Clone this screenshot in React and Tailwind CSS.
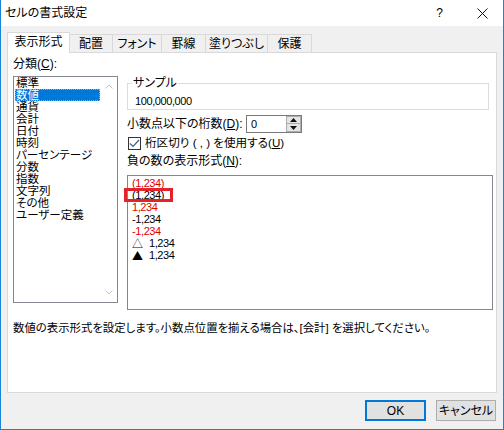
import React, { useState } from "react";

const ui = '"Liberation Sans", "Noto Sans CJK JP", sans-serif';
const cjk = '"Noto Sans CJK JP", sans-serif';

const tabs = [
  { label: "表示形式", w: "w-[63px]" },
  { label: "配置", w: "w-[44px]" },
  { label: "フォント", w: "w-[50px]" },
  { label: "罫線", w: "w-[45px]" },
  { label: "塗りつぶし", w: "w-[63px]" },
  { label: "保護", w: "w-[45px]" },
];

const categories = [
  "標準",
  "数値",
  "通貨",
  "会計",
  "日付",
  "時刻",
  "パーセンテージ",
  "分数",
  "指数",
  "文字列",
  "その他",
  "ユーザー定義",
];

const negatives = [
  { text: "(1,234)", red: true },
  { text: "(1,234)", red: false },
  { text: "1,234", red: true },
  { text: "-1,234", red: false },
  { text: "-1,234", red: true },
  { text: "1,234", mark: "△" },
  { text: "1,234", mark: "▲" },
];

export default function App() {
  const [activeTab, setActiveTab] = useState(0);
  const [category, setCategory] = useState(1);
  const [negative, setNegative] = useState(1);
  const [digits, setDigits] = useState(0);
  const [separator, setSeparator] = useState(true);

  return (
    <div
      className="w-[504px] h-[430px] bg-[#f0f0f0] border-x border-b border-[#1883d7] flex flex-col text-[12px] text-black [font-feature-settings:'palt'] select-none"
      style={{ fontFamily: ui }}
    >
      {/* title bar */}
      <div className="h-[26px] bg-white flex items-center pl-[4px] shrink-0">
        <span className="leading-[14px]">セルの書式設定</span>
        <span className="ml-auto mr-[34px] leading-[14px]">?</span>
        <svg width="11" height="11" viewBox="0 0 11 11" className="mr-[15px]">
          <path d="M0.5 0.5 L10.5 10.5 M10.5 0.5 L0.5 10.5" stroke="#111" strokeWidth="1" fill="none" />
        </svg>
      </div>

      {/* tabs */}
      <div className="mt-[6px] ml-[6px] h-[20px] flex items-end shrink-0">
        {tabs.map((t, i) => (
          <button
            key={i}
            onClick={() => setActiveTab(i)}
            className={`${t.w} flex items-center justify-center border-t border-x border-[#d9d9d9] leading-[14px] ${
              i > 0 ? "-ml-px" : ""
            } ${
              activeTab === i
                ? "h-[21px] -mb-px bg-white relative z-10 pb-[2px]"
                : "h-[18px] bg-[#f0f0f0]"
            }`}
          >
            {t.label}
          </button>
        ))}
      </div>

      {/* tab panel */}
      <div className="mx-[6px] h-[341px] bg-white border border-[#d9d9d9] flex flex-col shrink-0">
        <div className="flex">
          {/* left column */}
          <div className="ml-[5px] w-[105px]">
            <div className="mt-[4px] leading-[14px] h-[14px]">
              分類(<span className="underline">C</span>):
            </div>
            <div className="mt-[5px] h-[227px] border border-[#828790] flex">
              <div className="flex-1 pl-px">
                {categories.map((c, i) => (
                  <div
                    key={i}
                    onClick={() => setCategory(i)}
                    className={`h-[12px] leading-[12px] text-[11.5px] pl-px whitespace-nowrap ${
                      category === i ? "bg-[#0078d7] text-white outline outline-1 outline-dotted outline-[#7fb5e6] -outline-offset-1" : ""
                    }`}
                  >
                    {c}
                  </div>
                ))}
              </div>
              <div className="w-[17px] flex flex-col justify-between items-center py-[7px]">
                <svg width="8" height="5" viewBox="0 0 8 5">
                  <path d="M0.5 4.5 L4 1 L7.5 4.5" stroke="#c4c4c4" fill="none" />
                </svg>
                <svg width="8" height="5" viewBox="0 0 8 5">
                  <path d="M0.5 0.5 L4 4 L7.5 0.5" stroke="#c4c4c4" fill="none" />
                </svg>
              </div>
            </div>
          </div>

          {/* right column */}
          <div className="ml-[9px] w-[366px]">
            <fieldset className="mt-[23px] w-[362px] border border-[#dcdcdc] px-[4px]">
              <legend className="px-[1px] leading-[14px]">サンプル</legend>
              <div className="pt-[4px] pl-[3px] leading-[14px] h-[19px] text-[11px] tracking-[-0.4px]">
                100,000,000
              </div>
            </fieldset>

            <div className="mt-[5px] h-[18px] flex items-center">
              <div className="w-[119px] leading-[18px] whitespace-nowrap">
                小数点以下の桁数(<span className="underline">D</span>):
              </div>
              <div className="w-[56px] h-[18px] border border-[#7a7a7a] flex">
                <div className="flex-1 pl-[4px] leading-[16px] text-[11px]">{digits}</div>
                <div className="w-[15px] flex flex-col">
                  <button
                    onClick={() => setDigits(Math.min(30, digits + 1))}
                    className="h-[8px] bg-[#e5e5e5] border border-[#acacac] flex items-center justify-center"
                  >
                    <svg width="7" height="4" viewBox="0 0 7 4">
                      <path d="M0 4 L3.5 0 L7 4 Z" fill="#111" />
                    </svg>
                  </button>
                  <button
                    onClick={() => setDigits(Math.max(0, digits - 1))}
                    className="h-[8px] bg-[#e5e5e5] border border-[#acacac] border-t-0 flex items-center justify-center"
                  >
                    <svg width="7" height="4" viewBox="0 0 7 4">
                      <path d="M0 0 L3.5 4 L7 0 Z" fill="#111" />
                    </svg>
                  </button>
                </div>
              </div>
            </div>

            <div className="mt-[3px] h-[14px] flex items-center" onClick={() => setSeparator(!separator)}>
              <div className="ml-px w-[13px] h-[13px] border border-[#333] flex items-center justify-center bg-white">
                {separator && (
                  <svg width="11" height="9" viewBox="0 0 11 9">
                    <path d="M1 4.5 L4 7.5 L10 1" stroke="#3b5f8a" strokeWidth="1.2" fill="none" />
                  </svg>
                )}
              </div>
              <span className="ml-[4px] leading-[14px] whitespace-nowrap text-[11.6px]">
                桁区切り ( , ) を使用する(<span className="underline">U</span>)
              </span>
            </div>

            <div className="mt-[4px] leading-[14px] h-[14px]">
              負の数の表示形式(<span className="underline">N</span>):
            </div>

            <div className="mt-[7px] h-[135px] w-[366px] border border-[#828790] relative pt-px pl-[4px]">
              {negatives.map((n, i) => (
                <div
                  key={i}
                  onClick={() => setNegative(i)}
                  className={`h-[12px] leading-[12px] whitespace-nowrap text-[11px] tracking-[-0.4px] flex items-center ${
                    n.red ? "text-[#e00000]" : ""
                  }`}
                >
                  {n.mark && (
                    <span className="w-[17px] text-[11px] leading-[12px] tracking-normal" style={{ fontFamily: cjk }}>
                      {n.mark}
                    </span>
                  )}
                  <span>{n.text}</span>
                </div>
              ))}
              {/* red annotation box on the selected entry */}
              <div
                className="absolute left-[-4px] w-[49px] h-[14px] border-[3px] border-[#e1232b] pointer-events-none"
                style={{ top: 12 * negative }}
              />
            </div>
          </div>
        </div>

        <div className="mt-[11px] ml-[5px] leading-[14px] whitespace-nowrap text-[11.4px]">
          数値の表示形式を設定します。小数点位置を揃える場合は、[会計] を選択してください。
        </div>
      </div>

      {/* buttons */}
      <div className="mt-[7px] pr-[7px] flex justify-end gap-[10px]">
        <button className="w-[61px] h-[21px] bg-[#e1e1e1] border-2 border-[#0078d7] leading-[14px]">OK</button>
        <button className="w-[60px] h-[21px] bg-[#e1e1e1] border border-[#adadad] leading-[14px]">キャンセル</button>
      </div>
    </div>
  );
}
